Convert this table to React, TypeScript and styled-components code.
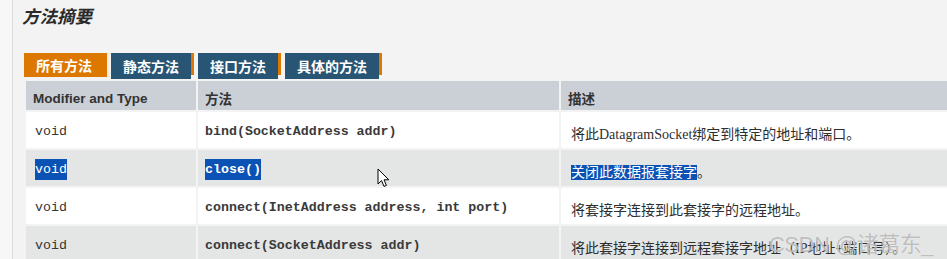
import React from 'react'
import styled, { createGlobalStyle } from 'styled-components'

const GlobalStyle = createGlobalStyle`
  html, body {
    margin: 0;
    padding: 0;
    background: #f3f3f3;
    overflow: hidden;
  }
  body {
    font-family: "Liberation Sans", "Noto Sans CJK SC", sans-serif;
    color: #353535;
  }
`

const Page = styled.div`
  position: relative;
  display: flex;
  height: 259px;
  overflow: hidden;
`

const Gutter = styled.div`
  flex: 0 0 12px;
  background: #f7f7f7;
  border-right: 1px solid #dcdcdc;
`

const Main = styled.main`
  flex: 1;
  min-width: 0;
  padding-left: 11px;
`

const Title = styled.h3`
  margin: 0 0 0 -2px;
  padding-top: 6px;
  font-family: "Liberation Sans", "Noto Sans CJK SC", sans-serif;
  font-size: 17.5px;
  line-height: 22px;
  font-weight: bold;
  font-style: italic;
  color: #2a2a2a;
`

const TabBar = styled.div`
  display: flex;
  align-items: flex-start;
  margin-top: 25px;
  height: 26px;
`

const Tab = styled.span<{ $active?: boolean }>`
  display: inline-flex;
  align-items: center;
  height: ${p => (p.$active ? '24px' : '26px')};
  padding: 0 12px;
  padding-bottom: 1px;
  box-sizing: border-box;
  background: ${p => (p.$active ? '#dc7800' : '#295575')};
  color: #fff;
  font-family: "Noto Sans CJK SC", sans-serif;
  font-size: 14px;
  font-weight: bold;
  white-space: nowrap;
`

const TabEnd = styled.span<{ $active?: boolean }>`
  display: inline-block;
  width: 3px;
  height: ${p => (p.$active ? '24px' : '22px')};
  margin-right: 4px;
  background: #dc7800;
  box-shadow: ${p => (p.$active ? '2px 0 0 #f7ecdd' : 'none')};
`

const Table = styled.table`
  width: 1000px;
  table-layout: fixed;
  border-collapse: separate;
  border-spacing: 2px;
`

const HeadCell = styled.th<{ $w?: number }>`
  width: ${p => (p.$w ? `${p.$w}px` : 'auto')};
  height: 29px;
  box-sizing: border-box;
  padding: 5px 0 0 7px;
  background: #cbd0d7;
  text-align: left;
  font-family: "Liberation Sans", "Noto Sans CJK SC", sans-serif;
  font-size: 13.5px;
  font-weight: bold;
  color: #333;
`

const Row = styled.tr<{ $alt?: boolean }>`
  background: ${p => (p.$alt ? '#e4e5e5' : '#ffffff')};
  height: 36px;
`

const TypeCell = styled.td`
  padding: 3px 0 0 9px;
  font-family: "Liberation Mono", monospace;
  font-size: 13.3px;
  color: #353535;
  white-space: nowrap;
`

const MethodCell = styled.td`
  padding: 3px 0 0 7px;
  font-family: "Liberation Mono", monospace;
  font-size: 13.3px;
  font-weight: bold;
  color: #3a3a3a;
  white-space: nowrap;
`

const DescCell = styled.td`
  padding: 5px 0 0 10px;
  font-family: "Liberation Serif", "Noto Sans CJK SC", serif;
  font-size: 14px;
  color: #2e2e2e;
  white-space: nowrap;
  overflow: hidden;
`

const Picked = styled.span<{ $tight?: boolean; $bold?: boolean }>`
  display: inline-block;
  line-height: ${p => (p.$tight ? '15px' : '21px')};
  background: #0b52b5;
  color: #fff;
  font-weight: ${p => (p.$bold ? 'bold' : 'normal')};
`

const Cursor = styled.svg`
  position: absolute;
  left: 377px;
  top: 168px;
  width: 13px;
  height: 20px;
  pointer-events: none;
`

const Watermark = styled.div`
  position: absolute;
  right: 14px;
  bottom: 1px;
  font-family: "Liberation Sans", "Noto Sans CJK SC", sans-serif;
  font-size: 22px;
  letter-spacing: -0.5px;
  color: rgba(150, 150, 150, 0.6);
  text-shadow: 0 0 1px rgba(255, 255, 255, 0.9);
  pointer-events: none;
`

type Method = {
  type: string
  sig: string
  desc: string
  picked?: boolean
}

const methods: Method[] = [
  {
    type: 'void',
    sig: 'bind(SocketAddress addr)',
    desc: '将此DatagramSocket绑定到特定的地址和端口。',
  },
  {
    type: 'void',
    sig: 'close()',
    desc: '关闭此数据报套接字',
    picked: true,
  },
  {
    type: 'void',
    sig: 'connect(InetAddress address, int port)',
    desc: '将套接字连接到此套接字的远程地址。',
  },
  {
    type: 'void',
    sig: 'connect(SocketAddress addr)',
    desc: '将此套接字连接到远程套接字地址（IP地址+端口号）。',
  },
]

const tabs = ['所有方法', '静态方法', '接口方法', '具体的方法']

export default function App() {
  return (
    <>
      <GlobalStyle />
      <Page>
        <Gutter />
        <Main>
          <Title>方法摘要</Title>
          <TabBar>
            {tabs.map((t, i) => (
              <React.Fragment key={t}>
                <Tab $active={i === 0}>{t}</Tab>
                <TabEnd $active={i === 0} />
              </React.Fragment>
            ))}
          </TabBar>
          <Table>
            <thead>
              <tr>
                <HeadCell $w={170}>Modifier and Type</HeadCell>
                <HeadCell $w={361}>方法</HeadCell>
                <HeadCell>描述</HeadCell>
              </tr>
            </thead>
            <tbody>
              {methods.map((m, i) => (
                <Row key={i} $alt={i % 2 === 1}>
                  <TypeCell>{m.picked ? <Picked>{m.type}</Picked> : m.type}</TypeCell>
                  <MethodCell>{m.picked ? <Picked $bold>{m.sig}</Picked> : m.sig}</MethodCell>
                  <DescCell>
                    {m.picked ? (
                      <>
                        <Picked $tight>{m.desc}</Picked>。
                      </>
                    ) : (
                      m.desc
                    )}
                  </DescCell>
                </Row>
              ))}
            </tbody>
          </Table>
        </Main>
        <Cursor viewBox="0 0 13 20">
          <path
            d="M1 1 L1 16 L4.5 12.6 L7 18.4 L9.4 17.4 L7 11.8 L11.8 11.8 Z"
            fill="#fff"
            stroke="#000"
            strokeWidth="1"
          />
        </Cursor>
        <Watermark>CSDN @诸葛东_</Watermark>
      </Page>
    </>
  )
}
